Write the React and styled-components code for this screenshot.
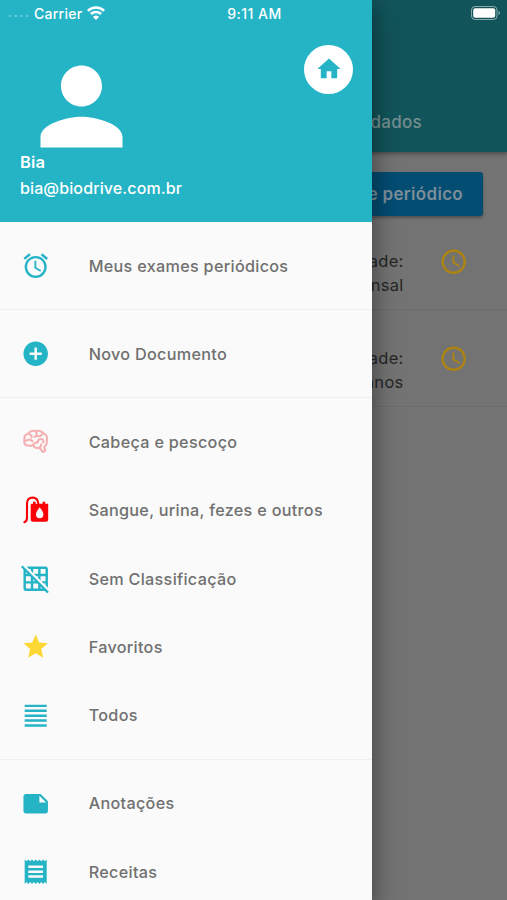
import styled, { createGlobalStyle } from "styled-components";
import {
  MdAccessTime,
  MdAddCircle,
  MdAlarm,
  MdFormatAlignJustify,
  MdGridOff,
  MdHome,
  MdNote,
  MdPerson,
  MdReceipt,
  MdStar,
} from "react-icons/md";

const teal = "#25b4c6";

const GlobalStyle = createGlobalStyle`
  * {
    box-sizing: border-box;
  }
  body {
    margin: 0;
    overflow: hidden;
    font-family: Inter, "Liberation Sans", sans-serif;
  }
`;

const Screen = styled.div`
  position: relative;
  width: 507px;
  height: 900px;
  overflow: hidden;
  background-color: #737373;
`;

/* page behind the drawer */
const Page = styled.main`
  display: flex;
  flex-direction: column;
`;

const AppBar = styled.header`
  display: flex;
  align-items: flex-end;
  justify-content: flex-end;
  height: 152px;
  padding: 0 85px 19px 0;
  background-color: #11545a;
  box-shadow: 0 2px 4px rgba(0, 0, 0, 0.35);
`;

const Tab = styled.span`
  color: #748e91;
  font-size: 17px;
  font-weight: 500;
  line-height: 21px;
  letter-spacing: 0.3px;
`;

const PageButton = styled.button`
  align-self: flex-end;
  width: 180px;
  height: 44px;
  margin: 20px 24px 0 0;
  padding: 0 20px 0 0;
  border: 0;
  border-radius: 3px;
  background-color: #034c72;
  box-shadow: 0 2px 3px rgba(0, 0, 0, 0.3);
  color: #7c8e99;
  font: inherit;
  font-size: 17px;
  font-weight: 600;
  letter-spacing: 0.3px;
  text-align: right;
  white-space: nowrap;
`;

const Exam = styled.div`
  display: flex;
  justify-content: flex-end;
  height: 97px;
  padding: 37px 39px 0 0;
  border-bottom: 1px solid #6c6c6c;
  color: #262626;
  font-size: 16.5px;
  line-height: 23.5px;
  letter-spacing: 0.3px;
  text-align: right;

  &:first-of-type {
    height: 94px;
    padding-top: 34px;
  }
  svg {
    margin: -3px 0 0 35px;
    color: #ad8411;
  }
`;

/* side drawer */
const Drawer = styled.aside`
  position: absolute;
  top: 0;
  left: 0;
  width: 372.4px;
  height: 900px;
  overflow: hidden;
  background-color: #fafafa;
`;

const DrawerShadow = styled(Drawer)`
  box-shadow: 0 8px 22px 2px rgba(0, 0, 0, 0.42);
`;

const DrawerHeader = styled.header`
  display: flex;
  justify-content: space-between;
  height: 221.7px;
  padding: 44.5px 19.4px 0 20px;
  background-color: ${teal};
  color: white;
`;

const Profile = styled.div`
  display: flex;
  flex-direction: column;
  font-size: 16.5px;
  line-height: 26px;

  svg {
    display: block;
    margin-bottom: -18.5px;
  }
`;

const Name = styled.strong`
  font-weight: 600;
  letter-spacing: 0.2px;
`;

const Email = styled.span`
  font-weight: 500;
  font-size: 16px;
  letter-spacing: 0.12px;
`;

const HomeButton = styled.button`
  display: flex;
  align-items: center;
  justify-content: center;
  width: 49px;
  height: 49px;
  padding: 0;
  border: 0;
  border-radius: 50%;
  background-color: white;
  color: ${teal};
`;

const Menu = styled.nav`
  padding-top: 9.8px;
`;

const Item = styled.a`
  display: flex;
  align-items: center;
  height: 68.42px;
  padding-left: 20.5px;
  color: #707070;

  svg {
    flex: none;
    color: ${(props) => props.$tint ?? teal};
  }
`;

const Label = styled.span`
  margin-left: 38.8px;
  font-size: 16.2px;
  font-weight: 500;
  letter-spacing: 0.3px;
`;

const Divider = styled.hr`
  height: 1px;
  margin: 9.3px 0;
  border: 0;
  background-color: #efefef;
`;

const StatusBar = styled.div`
  position: absolute;
  top: 0;
  left: 0;
  display: grid;
  grid-template-columns: 1fr auto 1fr;
  align-items: center;
  width: 507px;
  height: 26px;
  padding: 0 6px 0 8px;
  color: white;
  font-size: 14px;
  font-weight: 500;
`;

const Carrier = styled.div`
  display: flex;
  align-items: center;
  gap: 5px;
  letter-spacing: 0.25px;
`;

const Clock = styled.span`
  letter-spacing: 0.5px;
`;

const Battery = styled.svg`
  justify-self: end;
`;

const SignalDots = () => (
  <svg width="21" height="8" viewBox="0 0 21 8" fill="#fff" opacity=".3">
    <circle cx="2" cy="7" r="1.3" />
    <circle cx="7.800" cy="7" r="1.3" />
    <circle cx="13.600" cy="7" r="1.3" />
    <circle cx="19.200" cy="7" r="1.3" />
  </svg>
);

const Wifi = () => (
  <svg width="18" height="14" viewBox="0 0 18 14" fill="none" stroke="#fff" strokeWidth="2.5">
    <path d="M.9 4.8a11.6 11.6 0 0 1 16.2 0M3.9 8a7.3 7.3 0 0 1 10.2 0" />
    <path d="M9 14 5.9 10.9a4.5 4.5 0 0 1 6.2 0z" fill="#fff" stroke="none" />
  </svg>
);

const Brain = () => (
  <svg
    width="29.4"
    height="29.4"
    viewBox="0 0 29.4 29.4"
    fill="none"
    stroke="currentColor"
    strokeWidth="2.1"
    strokeLinecap="round"
    strokeLinejoin="round"
  >
    <path d="M7.500 18.500C4 19 2.500 15.500 3.500 13C3 10 4.500 7.500 7.500 6.500C9 4.500 12 3.500 14.500 4C18 3.300 21 4.500 22.500 6.500C25.500 7.500 26.600 10.500 25.800 13C26.300 16 25.300 18.500 23.300 20L24.300 23.800L22 25L18.500 20.800C15.500 21.500 12.500 20.500 12.500 18C11 19 9.200 19 7.500 18.500Z" />
    <path d="M8.500 7.500C10.500 8 11 9 10.500 10.500M4.500 14C7.500 12 10 12.500 11.500 14.500M15 4.500C16.500 7 15.500 9 13.500 10M16 9C18 9.500 20 9 21 7.500M12.500 18C13 16 15 15 17 15.500M17 15.500C16.500 13 18 12 20.500 12M20.500 12C22.500 12.500 23 14 22 15.500M18.500 20.500C20 19.500 20.500 18.500 20 17.500" />
  </svg>
);

const BloodBag = () => (
  <svg width="29.4" height="29.4" viewBox="0 0 29.4 29.4" fill="currentColor">
    <path
      d="M3.400 27.300C5.800 26.500 6 25 6 22.500V8.500C6 4.500 8.300 2.600 11.500 2.600S17 4.600 17.300 8.500"
      fill="none"
      stroke="currentColor"
      strokeWidth="2.100"
      strokeLinecap="round"
    />
    <path
      fillRule="evenodd"
      d="M10.600 8.800h1.400V6.800h2.600v2h7V6.800h2.600v2h3V24.500a2.300 2.300 0 0 1-2.300 2.300H12a2.300 2.300 0 0 1-2.300-2.300V9.700zM18.700 12.200c-2.200 3-3.700 5.200-3.700 7.300a3.700 3.700 0 0 0 7.400 0c0-2.100-1.500-4.300-3.700-7.300z"
    />
  </svg>
);

const groups = [
  [{ label: "Meus exames periódicos", icon: MdAlarm }],
  [{ label: "Novo Documento", icon: MdAddCircle }],
  [
    { label: "Cabeça e pescoço", icon: Brain, tint: "#f4b0b2" },
    { label: "Sangue, urina, fezes e outros", icon: BloodBag, tint: "#fb0007" },
    { label: "Sem Classificação", icon: MdGridOff },
    { label: "Favoritos", icon: MdStar, tint: "#fdd835" },
    { label: "Todos", icon: MdFormatAlignJustify },
  ],
  [
    { label: "Anotações", icon: MdNote },
    { label: "Receitas", icon: MdReceipt },
  ],
];

const App = () => {
  return (
    <Screen>
      <GlobalStyle />
      <Page>
        <AppBar>
          <Tab>dados</Tab>
        </AppBar>
        <PageButton>e periódico</PageButton>
        <Exam>
          <span>
            Periodicidade:
            <br />
            Mensal
          </span>
          <MdAccessTime size={29.4} />
        </Exam>
        <Exam>
          <span>
            Periodicidade:
            <br />2 anos
          </span>
          <MdAccessTime size={29.4} />
        </Exam>
      </Page>
      <DrawerShadow as="div" />
      <Drawer>
        <DrawerHeader>
          <Profile>
            <MdPerson size={123} />
            <Name>Bia</Name>
            <Email>bia@biodrive.com.br</Email>
          </Profile>
          <HomeButton>
            <MdHome size={28} />
          </HomeButton>
        </DrawerHeader>
        <Menu>
          {groups.map((items, i) => (
            <div key={i}>
              {i > 0 && <Divider />}
              {items.map(({ label, icon: Icon, tint }) => (
                <Item key={label} $tint={tint}>
                  <Icon size={29.4} />
                  <Label>{label}</Label>
                </Item>
              ))}
            </div>
          ))}
        </Menu>
      </Drawer>
      <StatusBar>
        <Carrier>
          <SignalDots />
          Carrier
          <Wifi />
        </Carrier>
        <Clock>9:11 AM</Clock>
        <Battery width="30" height="14" viewBox="0 0 30 14">
          <rect x=".5" y=".5" width="25.500" height="13" rx="3.500" fill="none" stroke="#fff" strokeOpacity=".5" />
          <rect x="2.200" y="2.200" width="22" height="9.600" rx="2" fill="#fff" />
          <path d="M27.500 4.800q3 2.200 0 4.400z" fill="#fff" fillOpacity=".5" />
        </Battery>
      </StatusBar>
    </Screen>
  );
};

export default App;
